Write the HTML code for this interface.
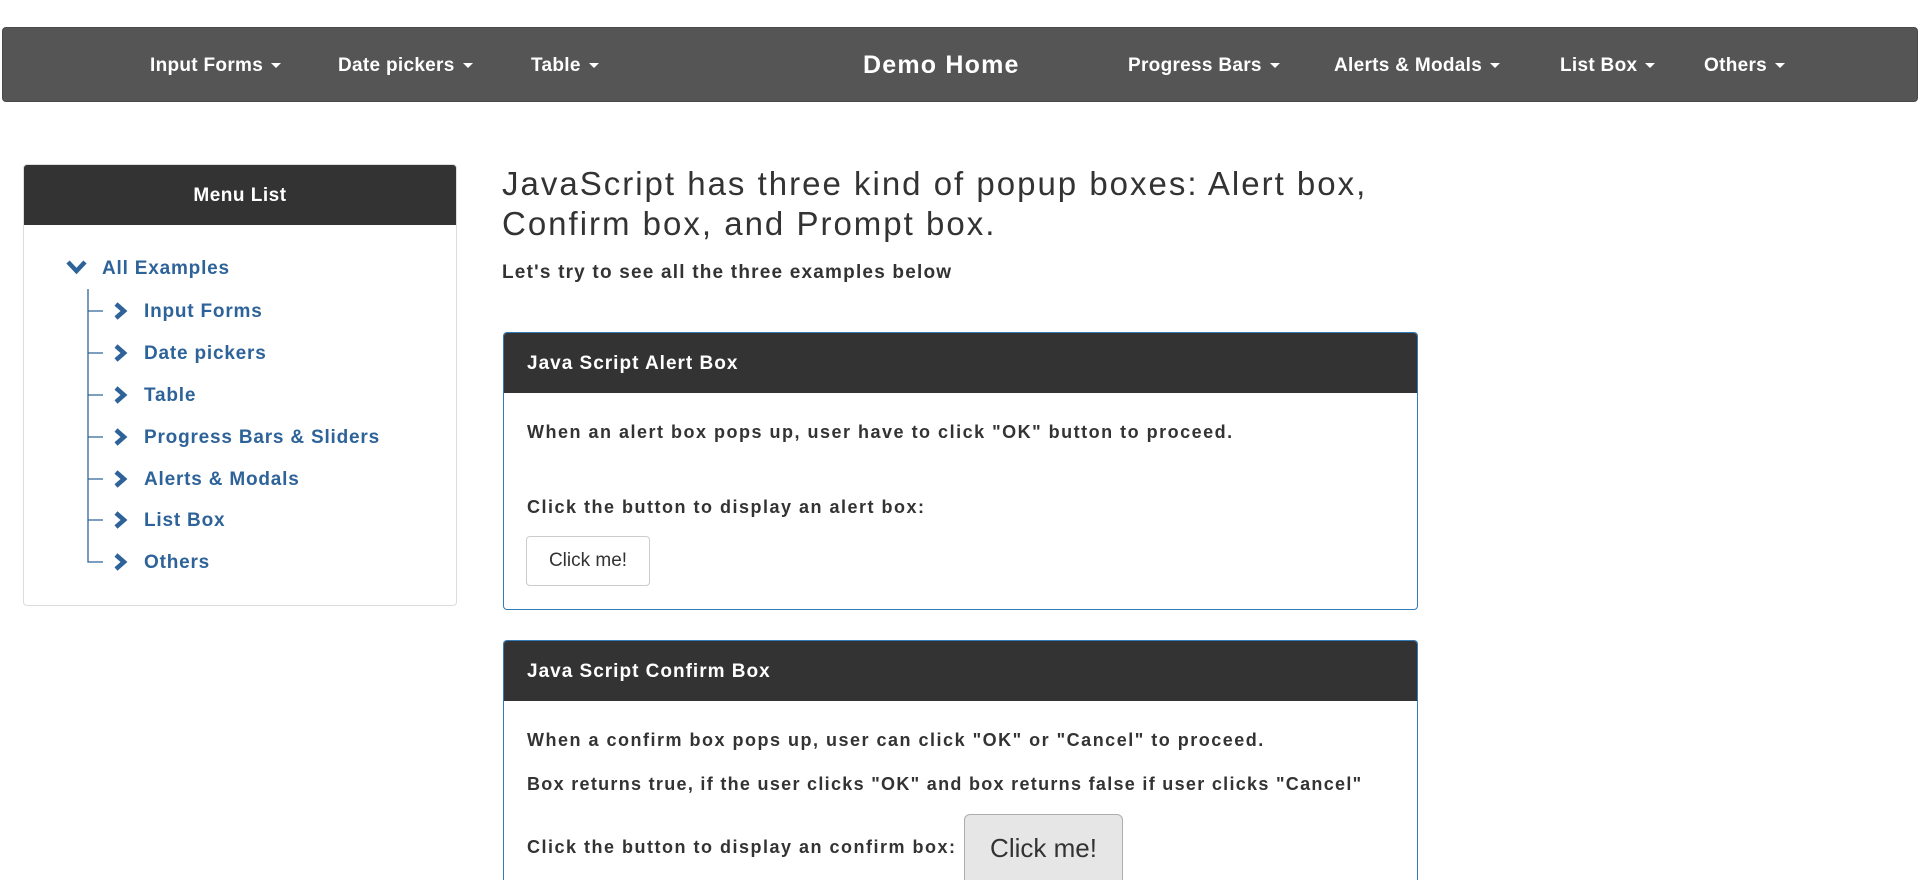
<!DOCTYPE html>
<html style="width:1920px;height:880px;overflow:hidden"><head><meta charset="utf-8"><style>
*{box-sizing:border-box;margin:0;padding:0}
body{width:1920px;height:880px;overflow:hidden;background:#fff;font-family:"Liberation Sans",sans-serif;color:#333;position:relative}
.a{position:absolute;white-space:nowrap}
.nav{position:absolute;left:2px;top:27px;width:1916px;height:75px;background:#555;border-radius:4px;border:1px solid #4a4a4a}
.ni{position:absolute;top:0;line-height:75px;color:#fff;font-weight:bold;font-size:19px;letter-spacing:0.3px}
.car{display:inline-block;width:0;height:0;border-left:5px solid transparent;border-right:5px solid transparent;border-top:5px solid #fff;margin-left:8px;vertical-align:middle}
.side{position:absolute;left:23px;top:164px;width:434px;height:442px;border:1px solid #ddd;border-radius:4px;overflow:hidden}
.sh{height:60px;background:#333;color:#fff;font-weight:bold;font-size:19px;text-align:center;line-height:62px;letter-spacing:0.5px}
.lk{color:#2e6399;font-weight:bold;font-size:19px;letter-spacing:0.8px}
.panel{position:absolute;left:503px;width:915px;border:1px solid #337ab7;border-radius:4px;overflow:hidden}
.ph{height:60px;background:#333;color:#fff;font-weight:bold;font-size:19px;line-height:62px;padding-left:23px;letter-spacing:1px}
.pt{position:absolute;left:23px;font-weight:bold;font-size:18px;color:#333;white-space:nowrap;letter-spacing:1.5px}
</style></head><body>
<div class="nav">
<div class="ni" style="left:147px">Input Forms<span class="car"></span></div>
<div class="ni" style="left:335px">Date pickers<span class="car"></span></div>
<div class="ni" style="left:528px">Table<span class="car"></span></div>
<div class="ni" style="left:860px;font-size:25px;letter-spacing:1.2px">Demo Home</div>
<div class="ni" style="left:1125px">Progress Bars<span class="car"></span></div>
<div class="ni" style="left:1331px">Alerts &amp; Modals<span class="car"></span></div>
<div class="ni" style="left:1557px">List Box<span class="car"></span></div>
<div class="ni" style="left:1701px">Others<span class="car"></span></div>
</div>

<div class="side"><div class="sh">Menu List</div></div>
<svg class="a" style="left:0;top:0" width="460" height="620">
<g fill="none" stroke="#2e6399" stroke-width="4.5" stroke-linecap="butt">
<path d="M68 262 L76.5 271 L85 262"/>
<path d="M116 304 L124 311 L116 318"/><path d="M116 346 L124 353 L116 360"/>
<path d="M116 388 L124 395 L116 402"/><path d="M116 430 L124 437 L116 444"/>
<path d="M116 472 L124 479 L116 486"/><path d="M116 513 L124 520 L116 527"/>
<path d="M116 555 L124 562 L116 569"/>
</g>
<g stroke="#2e6399" stroke-width="1.3" fill="none">
<path d="M88 289 V562 H103"/>
<path d="M88 311 H103 M88 353 H103 M88 395 H103 M88 437 H103 M88 479 H103 M88 520 H103"/>
</g>
</svg>
<div class="a lk" style="left:102px;top:258px">All Examples</div>
<div class="a lk" style="left:144px;top:301px">Input Forms</div>
<div class="a lk" style="left:144px;top:343px">Date pickers</div>
<div class="a lk" style="left:144px;top:385px">Table</div>
<div class="a lk" style="left:144px;top:427px">Progress Bars &amp; Sliders</div>
<div class="a lk" style="left:144px;top:469px">Alerts &amp; Modals</div>
<div class="a lk" style="left:144px;top:510px">List Box</div>
<div class="a lk" style="left:144px;top:552px">Others</div>

<div class="a" style="left:502px;top:164px;font-size:33px;line-height:40px;color:#333;letter-spacing:2px">JavaScript has three kind of popup boxes: Alert box,<br>Confirm box, and Prompt box.</div>
<div class="a" style="left:502px;top:262px;font-size:19px;font-weight:bold;letter-spacing:1.2px">Let's try to see all the three examples below</div>

<div class="panel" style="top:332px;height:278px">
<div class="ph">Java Script Alert Box</div>
<div class="pt" style="top:89px">When an alert box pops up, user have to click "OK" button to proceed.</div>
<div class="pt" style="top:164px">Click the button to display an alert box:</div>
<div class="a" style="left:22px;top:203px;width:124px;height:50px;border:1px solid #ccc;border-radius:4px;font-size:19px;line-height:48px;text-align:center;color:#333">Click me!</div>
</div>

<div class="panel" style="top:640px;height:260px;border-bottom:none">
<div class="ph">Java Script Confirm Box</div>
<div class="pt" style="top:89px">When a confirm box pops up, user can click "OK" or "Cancel" to proceed.</div>
<div class="pt" style="top:133px;letter-spacing:1.3px">Box returns true, if the user clicks "OK" and box returns false if user clicks "Cancel"</div>
<div class="pt" style="top:196px">Click the button to display an confirm box:</div>
<div class="a" style="left:460px;top:173px;width:159px;height:80px;border:1px solid #adadad;border-radius:6px;background:#e6e6e6;font-size:26px;line-height:66px;text-align:center;color:#333">Click me!</div>
</div>
</body></html>
